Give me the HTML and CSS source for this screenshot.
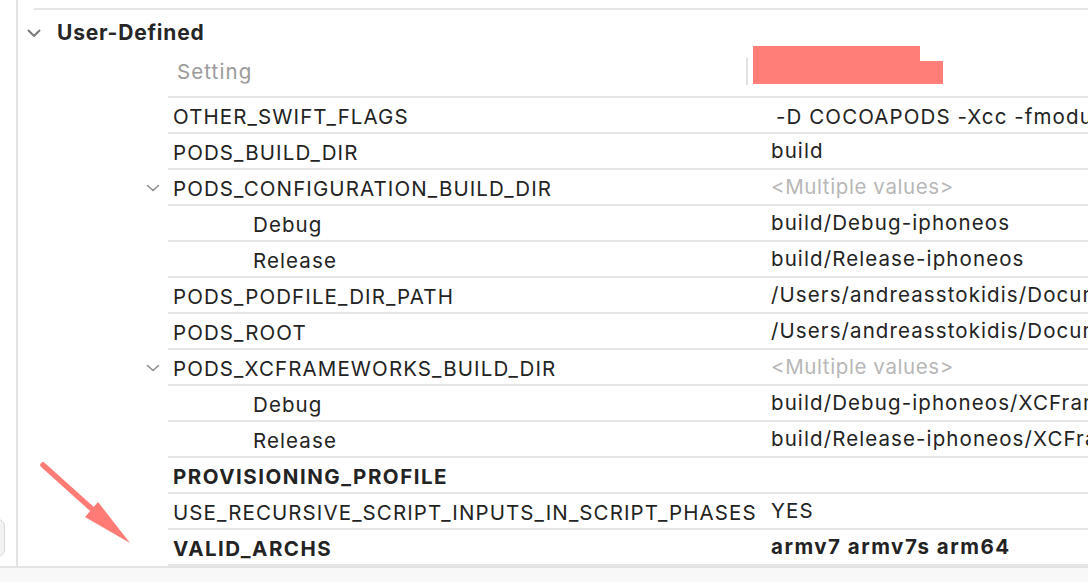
FILE: index.html
```html
<!DOCTYPE html>
<html>
<head>
<meta charset="utf-8">
<link rel="stylesheet" href="styles.css">
</head>
<body>
<div class="page">
  <div class="body">
    <div class="gutter"><div class="side-btn"></div></div>
    <div class="main">
      <div class="section-top"></div>
      <div class="group-title">
        <svg class="chev-lg" width="14" height="9" viewBox="0 0 14 9"><path d="M1.5 1.5 L7 7 L12.5 1.5" fill="none" stroke="#7b7b7b" stroke-width="2" stroke-linecap="round" stroke-linejoin="round"/></svg>
        <span>User-Defined</span>
      </div>
      <div class="table">
        <div class="hdr">
          <div class="slot"></div>
          <div class="cells hdr-cells">
            <div class="name hdr-name">Setting</div>
            <div class="hdr-val">
              <div class="divider"></div>
              <div class="redact">
                <div class="r1"></div>
                <div class="r2"></div>
              </div>
            </div>
          </div>
        </div>

        <div class="row"><div class="slot"></div><div class="cells"><div class="name">OTHER_SWIFT_FLAGS</div><div class="val pad">-D COCOAPODS -Xcc -fmodule-map-file=</div></div></div>
        <div class="row"><div class="slot"></div><div class="cells"><div class="name">PODS_BUILD_DIR</div><div class="val">build</div></div></div>
        <div class="row"><div class="slot"><svg class="chev" width="14" height="8" viewBox="0 0 14 8"><path d="M1.5 1.5 L7 6.5 L12.5 1.5" fill="none" stroke="#8e8e8e" stroke-width="1.6" stroke-linecap="round" stroke-linejoin="round"/></svg></div><div class="cells"><div class="name">PODS_CONFIGURATION_BUILD_DIR</div><div class="val multi">&lt;Multiple values&gt;</div></div></div>
        <div class="row"><div class="slot"></div><div class="cells"><div class="name sub">Debug</div><div class="val">build/Debug-iphoneos</div></div></div>
        <div class="row"><div class="slot"></div><div class="cells"><div class="name sub">Release</div><div class="val">build/Release-iphoneos</div></div></div>
        <div class="row"><div class="slot"></div><div class="cells"><div class="name">PODS_PODFILE_DIR_PATH</div><div class="val">/Users/andreasstokidis/Documents/</div></div></div>
        <div class="row"><div class="slot"></div><div class="cells"><div class="name">PODS_ROOT</div><div class="val">/Users/andreasstokidis/Documents/</div></div></div>
        <div class="row"><div class="slot"><svg class="chev" width="14" height="8" viewBox="0 0 14 8"><path d="M1.5 1.5 L7 6.5 L12.5 1.5" fill="none" stroke="#8e8e8e" stroke-width="1.6" stroke-linecap="round" stroke-linejoin="round"/></svg></div><div class="cells"><div class="name">PODS_XCFRAMEWORKS_BUILD_DIR</div><div class="val multi">&lt;Multiple values&gt;</div></div></div>
        <div class="row"><div class="slot"></div><div class="cells"><div class="name sub">Debug</div><div class="val">build/Debug-iphoneos/XCFrameworkIntermediates</div></div></div>
        <div class="row"><div class="slot"></div><div class="cells"><div class="name sub">Release</div><div class="val">build/Release-iphoneos/XCFrameworkIntermediates</div></div></div>
        <div class="row bold"><div class="slot"></div><div class="cells"><div class="name">PROVISIONING_PROFILE</div><div class="val"></div></div></div>
        <div class="row"><div class="slot"></div><div class="cells"><div class="name">USE_RECURSIVE_SCRIPT_INPUTS_IN_SCRIPT_PHASES</div><div class="val">YES</div></div></div>
        <div class="row bold"><div class="slot"></div><div class="cells"><div class="name">VALID_ARCHS</div><div class="val">armv7 armv7s arm64</div></div></div>
      </div>
      <svg class="arrow" width="100" height="90" viewBox="0 0 100 90">
        <line x1="13" y1="10" x2="62" y2="54" stroke="#ff7b76" stroke-width="5.5" stroke-linecap="round"/>
        <polygon points="55,62 68,47 100,88" fill="#ff7b76"/>
      </svg>
    </div>
  </div>
  <div class="footer"></div>
</div>
</body>
</html>
```

FILE: styles.css
```css
html, body {
  margin: 0;
  padding: 0;
  background: #ffffff;
}
body {
  font-family: Inter, "Noto Sans", "Liberation Sans", sans-serif;
  color: #232323;
  overflow: hidden;
}
.page {
  width: 1088px;
  height: 582px;
  display: flex;
  flex-direction: column;
  overflow: hidden;
}
.body {
  display: flex;
  height: 566px;
}
.gutter {
  width: 16px;
  display: flex;
  flex-direction: column;
  justify-content: flex-end;
  padding-bottom: 9px;
  box-sizing: border-box;
  overflow: hidden;
}
.side-btn {
  width: 40px;
  height: 38px;
  margin-left: -35px;
  border: 1px solid #d9d9d9;
  border-radius: 7px;
  background: #f3f3f3;
  box-sizing: border-box;
}
.main {
  flex: 1;
  border-left: 2px solid #e4e4e4;
  position: relative;
  overflow: hidden;
}
.section-top {
  margin-top: 8px;
  margin-left: 16px;
  border-top: 2px solid #e6e6e6;
}
.group-title {
  height: 44px;
  display: flex;
  align-items: center;
  padding-left: 9px;
  font-size: 21px;
  font-weight: 700;
  color: #262626;
  letter-spacing: 0.8px;
}
.group-title .chev-lg {
  margin-right: 16px;
  margin-top: 2px;
}
.table {
  margin-left: 120px;
}
.hdr, .row {
  display: flex;
}
.slot {
  width: 30px;
  flex: none;
  display: flex;
  align-items: center;
  padding-left: 8px;
  box-sizing: border-box;
}
.cells {
  flex: 1;
  display: grid;
  grid-template-columns: 603px 1fr;
  border-bottom: 2px solid #e6e6e6;
  min-width: 0;
}
.hdr-cells {
  height: 42px;
  align-items: start;
}
.row .cells {
  height: 36px;
  padding-top: 2px;
  box-sizing: border-box;
  align-items: center;
}
.name {
  padding-left: 5px;
  font-size: 20.5px;
  letter-spacing: 1.1px;
  white-space: nowrap;
  overflow: hidden;
}
.name.sub {
  padding-left: 85px;
}
.hdr-name {
  color: #9b9b9b;
  padding-left: 9px;
  padding-top: 6px;
  line-height: 24px;
}
.hdr-val {
  position: relative;
  margin-left: -25px;
  padding-top: 4px;
}
.divider {
  width: 2px;
  height: 27px;
  background: #e2e2e2;
}
.redact {
  position: absolute;
  left: 7px;
  top: -8px;
  display: flex;
  flex-direction: column;
}
.r1 {
  width: 167px;
  height: 19px;
  background: #ff7f78;
}
.r2 {
  width: 190px;
  height: 23px;
  margin-top: -4px;
  background: #ff7f78;
}
.val {
  font-size: 20.5px;
  letter-spacing: 1.1px;
  white-space: nowrap;
  overflow: hidden;
  margin-top: -3px;
}
.val.pad {
  padding-left: 5px;
  margin-top: 0;
}
.val.multi {
  color: #b7b7b7;
  letter-spacing: 0.6px;
}
.row.bold .name, .row.bold .val {
  font-weight: 700;
  letter-spacing: 1.5px;
}
.arrow {
  position: absolute;
  left: 12px;
  top: 455px;
}
.footer {
  height: 16px;
  border-top: 2px solid #e4e4e4;
  background: #f8f8f8;
}
```
